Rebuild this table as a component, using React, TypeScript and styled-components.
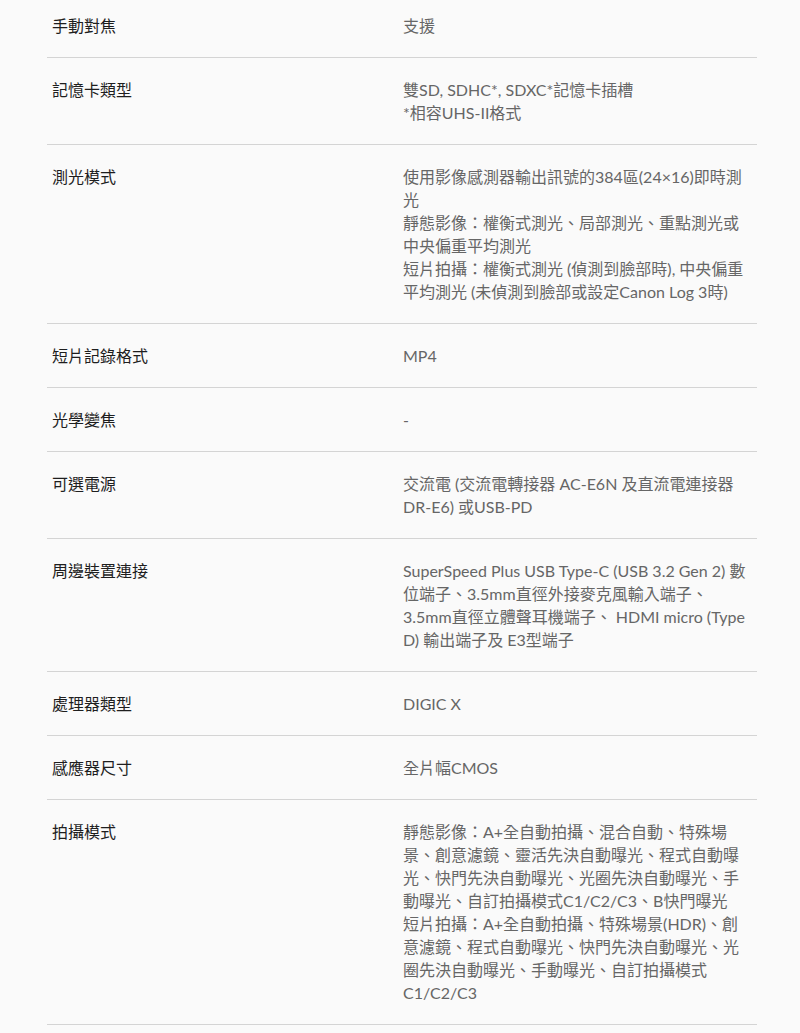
import * as React from 'react';
import styled, { createGlobalStyle } from 'styled-components';

const GlobalStyle = createGlobalStyle`
	html, body {
		margin: 0;
		padding: 0;
		background-color: #fafafa;
	}

	body {
		font-family: Lato, 'Noto Sans CJK TC', sans-serif;
	}
`;

interface ISpec {
	label: string;
	lines: string[];
}

const specs: ISpec[] = [
	{ label: '手動對焦', lines: ['支援'] },
	{ label: '記憶卡類型', lines: ['雙SD, SDHC*, SDXC*記憶卡插槽', '*相容UHS-II格式'] },
	{
		label: '測光模式',
		lines: [
			'使用影像感測器輸出訊號的384區(24×16)即時測光',
			'靜態影像：權衡式測光、局部測光、重點測光或中央偏重平均測光',
			'短片拍攝：權衡式測光 (偵測到臉部時), 中央偏重平均測光 (未偵測到臉部或設定Canon Log 3時)'
		]
	},
	{ label: '短片記錄格式', lines: ['MP4'] },
	{ label: '光學變焦', lines: ['-'] },
	{ label: '可選電源', lines: ['交流電 (交流電轉接器 AC-E6N 及直流電連接器 DR-E6) 或USB-PD'] },
	{
		label: '周邊裝置連接',
		lines: ['SuperSpeed Plus USB Type-C (USB 3.2 Gen 2) 數位端子、3.5mm直徑外接麥克風輸入端子、3.5mm直徑立體聲耳機端子、 HDMI micro (Type D) 輸出端子及 E3型端子']
	},
	{ label: '處理器類型', lines: ['DIGIC X'] },
	{ label: '感應器尺寸', lines: ['全片幅CMOS'] },
	{
		label: '拍攝模式',
		lines: [
			'靜態影像：A+全自動拍攝、混合自動、特殊場景、創意濾鏡、靈活先決自動曝光、程式自動曝光、快門先決自動曝光、光圈先決自動曝光、手動曝光、自訂拍攝模式C1/C2/C3、B快門曝光',
			'短片拍攝：A+全自動拍攝、特殊場景(HDR)、創意濾鏡、程式自動曝光、快門先決自動曝光、光圈先決自動曝光、手動曝光、自訂拍攝模式C1/C2/C3'
		]
	}
];

const SpecTable = styled.div`
	width: 710px;
	margin-left: 47px;
`;

const SpecRow = styled.div<{ $first?: boolean }>`
	display: grid;
	grid-template-columns: 355px 355px;
	padding: ${p => (p.$first ? '14px' : '20px')} 0 20px;
	border-bottom: 1px solid #d4d4d4;
	font-size: 16px;
	line-height: 23px;
`;

const SpecLabel = styled.div`
	padding-left: 5px;
	color: #1e1e1e;
	font-weight: 400;
`;

const SpecValue = styled.div`
	padding: 0 10px 0 1px;
	color: #666;

	p {
		margin: 0;
	}
`;

export default function App() {
	return (
		<>
			<GlobalStyle />
			<SpecTable>
				{specs.map((spec, i) => (
					<SpecRow key={spec.label} $first={i === 0}>
						<SpecLabel>{spec.label}</SpecLabel>
						<SpecValue>
							{spec.lines.map(line => <p key={line}>{line}</p>)}
						</SpecValue>
					</SpecRow>
				))}
			</SpecTable>
		</>
	);
}
